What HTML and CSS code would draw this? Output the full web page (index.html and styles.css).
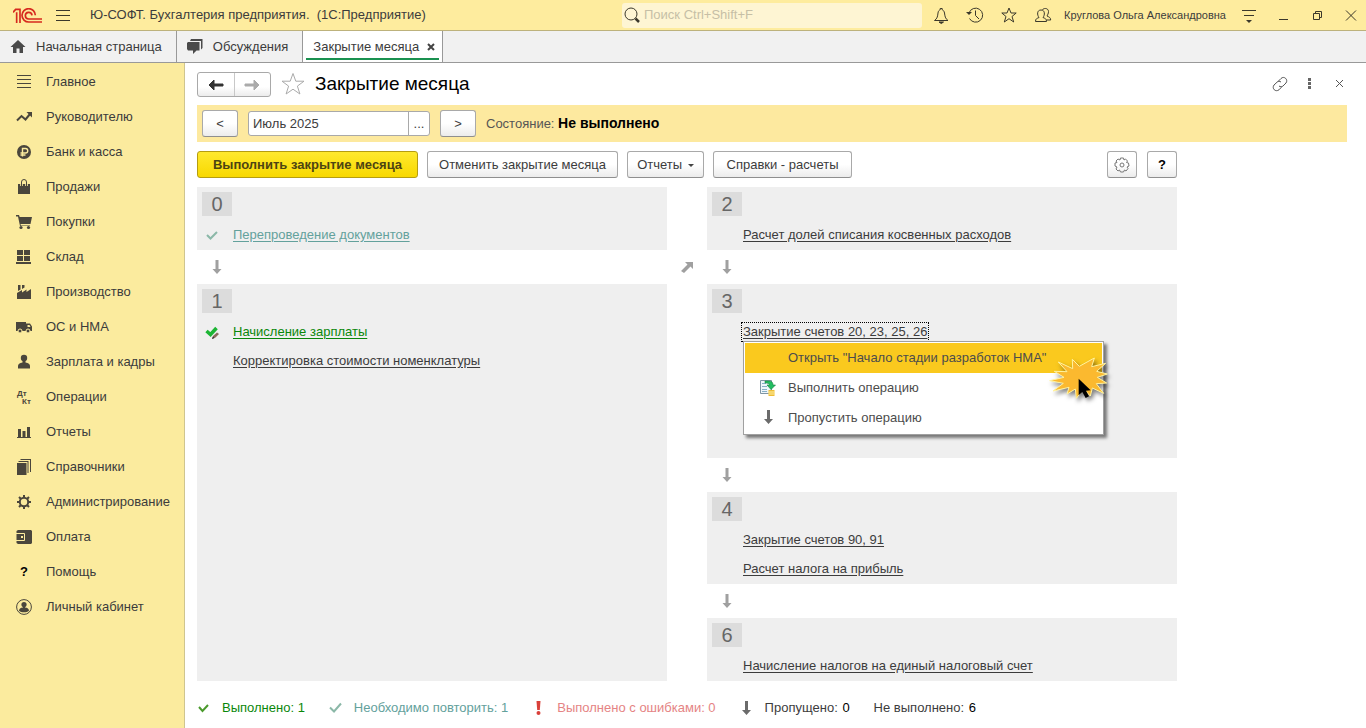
FILE: index.html
```html
<!DOCTYPE html>
<html lang="ru">
<head>
  <meta charset="UTF-8" />
  <title>Закрытие месяца</title>
  <meta name="viewport" content="width=device-width, initial-scale=1.0"/>
  <link rel="stylesheet" href="styles.css">
</head>
<body>

  <header class="topbar">
    <svg class="logo" viewBox="0 0 87 45" fill="none" stroke="#d6291e" stroke-width="5">
      <path d="M0 13 L8 4 H21 V45 M11 13 V45"/>
      <path d="M67 22 A20 20 0 1 0 47 42 H87"/>
      <path d="M57 22 A10 10 0 1 0 47 33 H87"/>
    </svg>
    <button class="icon-btn" aria-label="Меню">
      <svg viewBox="0 0 20 20"><path d="M3 5.500h14M3 10.500h14M3 15.500h14"/></svg>
    </button>
    <div class="app-title">Ю-СОФТ. Бухгалтерия предприятия.&nbsp; (1С:Предприятие)</div>
    <div class="search">
      <svg viewBox="0 0 20 20"><circle cx="9" cy="9" r="6"/><path d="M13.500 13.500 L17 17" stroke-width="2.500"/></svg>
      <input type="text" aria-label="Поиск" placeholder="Поиск Ctrl+Shift+F">
    </div>
    <div class="top-icons">
      <button class="icon-btn" aria-label="Уведомления">
        <svg viewBox="0 0 20 20"><path d="M3.500 15.500h13.500c-3-2-3-4.500-3.500-7.500-.3-2-1.500-3-2.300-3.200V3.500h-2v1.300C8.300 5 7.200 6 7 8c-.4 3-.5 5.500-3.500 7.500z"/><path d="M8 17h4.500l-2.200 1.500z" fill="#3b382b"/></svg>
      </button>
      <button class="icon-btn" aria-label="История">
        <svg viewBox="0 0 20 20"><path d="M4 8a7 7 0 1 1 .5 5.500M10.500 5.500V10.500L14 14"/><path d="M1 7h6L4 10z" fill="#3b382b" stroke="none"/></svg>
      </button>
      <button class="icon-btn" aria-label="Избранное">
        <svg viewBox="0 0 20 20"><path d="M10 3l2 5h5.200l-4.200 3.500 1.700 5.500L10 13.700 5.300 17 7 11.500 2.800 8H8z"/></svg>
      </button>
      <button class="icon-btn" aria-label="Пользователи">
        <svg viewBox="0 0 20 20"><path d="M2.500 16.500h11c0-3-1.500-3-3.500-4 2-2.500 2.200-7.500-2-7.500s-4 5-2 7.500c-2 1-3.500 1-3.500 4z"/><path d="M9.500 5c.5-2 5.800-2.500 6 1.500 0 2-1 3.500-1.500 4.500 2 1 3.700 1.500 3.700 4h-4"/></svg>
      </button>
      <a class="user" href="#">Круглова Ольга Александровна</a>
      <button class="icon-btn" aria-label="Сервис">
        <svg viewBox="0 0 20 20"><path d="M3 5.500h14M5 10.500h10"/><path d="M7 15h6l-3 3z" fill="#3b382b" stroke="none"/></svg>
      </button>
      <button class="icon-btn" aria-label="Свернуть">
        <svg viewBox="0 0 20 20"><path d="M6 14.500h9"/></svg>
      </button>
      <button class="icon-btn" aria-label="Развернуть">
        <svg viewBox="0 0 20 20"><path d="M6.500 8.500h6v6h-6zM8.500 8V6.500h6v6h-2"/></svg>
      </button>
      <button class="icon-btn" aria-label="Закрыть">
        <svg viewBox="0 0 20 20"><path d="M5 5.500l10 10M15 5.500l-10 10"/></svg>
      </button>
    </div>
  </header>

  <nav class="tabs">
    <a class="tab" href="#">
      <svg viewBox="0 0 16 16"><path d="M8 1L.5 8H3v6h3.500V9.500h3V14H13V8h2.500z"/></svg>
      Начальная страница
    </a>
    <a class="tab" href="#">
      <svg viewBox="0 0 16 16"><path d="M4 0h11.500v9l-1.500 1.500V2H3z"/><path d="M1 3h11.500v8.500H9.500L6 15v-3.500H1L0 10V4z"/></svg>
      Обсуждения
    </a>
    <div class="tab active">
      <a href="#">Закрытие месяца</a>
      <button class="tab-close" aria-label="Закрыть вкладку">
        <svg viewBox="0 0 8 8"><path d="M1 1l6 6M7 1L1 7"/></svg>
      </button>
    </div>
  </nav>

  <div class="layout">

    <nav class="sidebar">
      <a href="#"><svg viewBox="0 0 16 16"><path d="M1 1h14v1H1zM1 5h14v1H1zM1 9h14v1H1zM1 13h14v1H1z"/></svg>Главное</a>
      <a href="#"><svg viewBox="0 0 16 16"><path d="M1 11.500L5.500 7l4 3.500L14 5" fill="none" stroke="#4a463c" stroke-width="2"/><path d="M10.500 3H16v5.500z"/></svg>Руководителю</a>
      <a href="#"><svg viewBox="0 0 16 16"><circle cx="8" cy="8" r="7"/><path d="M6.500 12.500V4.500H9.500a2 2 0 0 1 0 4.500H4.500M4.500 11h5" fill="none" stroke="#fbeb9e" stroke-width="1.400"/></svg>Банк и касса</a>
      <a href="#"><svg viewBox="0 0 16 16"><path d="M2 5h12v10H2z"/><path d="M5.500 7V3.500a2.500 2.500 0 0 1 5 0V7" fill="none" stroke="#fbeb9e" stroke-width="2.600"/><path d="M5.500 7V3a2.500 2.500 0 0 1 5 0V7" fill="none" stroke="#4a463c" stroke-width="1"/></svg>Продажи</a>
      <a href="#"><svg viewBox="0 0 16 16"><path d="M0 1h3l.7 2H16l-1.500 7H4.500l.3 1.500H14V12H4L2 2.500H0z"/><circle cx="5" cy="13.500" r="1.600"/><circle cx="12.500" cy="13.500" r="1.600"/></svg>Покупки</a>
      <a href="#"><svg viewBox="0 0 16 16"><path d="M1 1h6v5H1zM8 1h6v5H8zM1 7h6v5H1zM8 7h6v5H8zM0 13h15v2H0z"/></svg>Склад</a>
      <a href="#"><svg viewBox="0 0 16 16"><path d="M1 15V9l5-3v2.500l4.500-3V8L15 5v10z"/><path d="M2 1h2.500v4.500L2 7zM6 1h2.500v2.500L6 5z"/></svg>Производство</a>
      <a href="#"><svg viewBox="0 0 16 16"><path d="M0 3h10v9H0zM10 4.500h4L16 7.500V12h-6z"/><path d="M11.500 6h2l1 2h-3z" fill="#fbeb9e"/><circle cx="4" cy="12" r="2" stroke="#fbeb9e"/><circle cx="12" cy="12" r="2" stroke="#fbeb9e"/></svg>ОС и НМА</a>
      <a href="#"><svg viewBox="0 0 16 16"><circle cx="8" cy="4" r="3.200"/><path d="M6.500 6h3v2.500c3 .5 4.500 1.500 4.500 3.500v2.500H2V12c0-2 1.500-3 4.500-3.500z"/></svg>Зарплата и кадры</a>
      <a href="#"><svg viewBox="0 0 16 16" class="dtkt"><text x="1" y="7">Дт</text><text x="6" y="15">Кт</text></svg>Операции</a>
      <a href="#"><svg viewBox="0 0 16 16"><path d="M1 13h14v1H1zM2 5h3v8H2zM6.500 7h3v6h-3zM11 3h3v10h-3z"/></svg>Отчеты</a>
      <a href="#"><svg viewBox="0 0 16 16"><path d="M1 4h9.500v12H1zM2.500 2H12.500v12h-1V3h-9zM4.500 0H15v13h-1V1H4.500z"/></svg>Справочники</a>
      <a href="#"><svg viewBox="0 0 16 16"><circle cx="8" cy="8" r="4.200" fill="none" stroke="#4a463c" stroke-width="2"/><path d="M8 1v3M8 12v3M1 8h3M12 8h3M3 3l2 2M11 11l2 2M13 3l-2 2M5 11l-2 2" stroke="#4a463c" stroke-width="2"/></svg>Администрирование</a>
      <a href="#"><svg viewBox="0 0 16 16"><path d="M2 1h13l1 1v12l-1 1H2l-1.500-1V2z"/><path d="M0 4.500h8.500v7H0" fill="none" stroke="#fbeb9e"/><path d="M5 7h2v2H5z" fill="#fbeb9e"/></svg>Оплата</a>
      <a href="#"><b>?</b>Помощь</a>
      <a href="#"><svg viewBox="0 0 16 16"><circle cx="8" cy="8" r="7.400" fill="none" stroke="#4a463c"/><circle cx="8" cy="5.500" r="2.600"/><path d="M7 7h2v1.500c2.500.3 4 1.200 4 3.200-2.500 2-7.500 2-10 0 0-2 1.500-2.900 4-3.200z"/></svg>Личный кабинет</a>
    </nav>

    <main class="main">

      <div class="form-head">
        <div class="history">
          <button aria-label="Назад"><svg viewBox="0 0 16 12"><path d="M1 6l5-5v4h9v2H6v4z"/></svg></button>
          <button aria-label="Вперед" disabled><svg viewBox="0 0 16 12"><path d="M15 6l-5-5v4H1v2h9v4z"/></svg></button>
        </div>
        <button class="fav" aria-label="В избранное">
          <svg viewBox="0 0 24 24"><path d="M12 1.500l2.800 7.700H23l-6.600 4.900 2.500 7.900-6.900-4.800L5.100 22l2.500-7.900L1 9.200h8.200z"/></svg>
        </button>
        <h1>Закрытие месяца</h1>
        <div class="form-tools">
          <button class="icon-btn" aria-label="Ссылка">
            <svg viewBox="0 0 20 20"><path d="M8 7.500l3-3c3-3 7.500 1 5 4.500l-3 3c-1 1-2.800 1-4 0M11 8c-1.500-1-3-.8-4 .2L4 11c-2.500 3.500 1.500 7.500 5 4.800l2.500-2.600"/></svg>
          </button>
          <button class="icon-btn" aria-label="Еще">
            <svg viewBox="0 0 20 20"><path d="M8 4h3v3H8zM8 8h3v3H8zM8 12h3v3H8z" fill="#666" stroke="none"/></svg>
          </button>
          <button class="icon-btn" aria-label="Закрыть форму">
            <svg viewBox="0 0 20 20"><path d="M6 6l7 7M13 6l-7 7"/></svg>
          </button>
        </div>
      </div>

      <div class="period">
        <button class="btn step" aria-label="Предыдущий месяц">&lt;</button>
        <div class="period-field">
          <input type="text" aria-label="Период" value="Июль 2025">
          <button aria-label="Выбрать период">...</button>
        </div>
        <button class="btn step" aria-label="Следующий месяц">&gt;</button>
        <div class="state">Состояние: <b>Не выполнено</b></div>
      </div>

      <div class="commands">
        <button class="btn primary">Выполнить закрытие месяца</button>
        <button class="btn cancel">Отменить закрытие месяца</button>
        <button class="btn reports">Отчеты <span class="caret"></span></button>
        <button class="btn refs">Справки - расчеты</button>
        <div class="side-commands">
          <button class="btn square" aria-label="Настройки">
            <svg viewBox="0 0 16 16"><circle cx="8" cy="8" r="2"/><path d="M6.500 1h3l.5 2 1.500-1 2 2-1 1.500 2 .5.500 3-2 1 1 1.500-2 2.500-1.500-1-1 2h-3l-1-2-1.500 1-2-2 1-2-2-1V6l2-.5-1-1.500 2-2L6 3z"/></svg>
          </button>
          <button class="btn square" aria-label="Справка"><b>?</b></button>
        </div>
      </div>

      <div class="board">
        <div class="column">
          <section class="stage">
            <h2>0</h2>
            <ul>
              <li>
                <svg class="mark" viewBox="0 0 14 14"><path d="M2 7l3.500 3.500L12 4" fill="none" stroke="#8bb8a8" stroke-width="2"/></svg>
                <a class="repeat" href="#">Перепроведение документов</a>
              </li>
            </ul>
          </section>
          <div class="flow">
            <svg viewBox="0 0 10 14"><path d="M3.500 0h3v9H9.500L5 14 .5 9h3z"/></svg>
            <svg class="diag" viewBox="0 0 12 12"><path d="M4 1h8v7L9.500 5.500 3 12 0 10l6.500-6.500z"/></svg>
          </div>
          <section class="stage grow">
            <h2>1</h2>
            <ul>
              <li>
                <svg class="mark" viewBox="0 0 14 14"><path d="M1.500 6l4 3.500L11.500 3" fill="none" stroke="#1cb534" stroke-width="3.500"/><path d="M7 14l1-3L12 7.500l2 1.500-3.500 3.500z" fill="#8b6a5c"/><path d="M7 14l1-2.500 1.500 1.500z" fill="#333"/></svg>
                <a class="done" href="#">Начисление зарплаты</a>
              </li>
              <li><a href="#">Корректировка стоимости номенклатуры</a></li>
            </ul>
          </section>
        </div>

        <div class="column">
          <section class="stage">
            <h2>2</h2>
            <ul>
              <li><a href="#">Расчет долей списания косвенных расходов</a></li>
            </ul>
          </section>
          <div class="flow"><svg viewBox="0 0 10 14"><path d="M3.500 0h3v9H9.500L5 14 .5 9h3z"/></svg></div>
          <section class="stage tall">
            <h2>3</h2>
            <ul>
              <li>
                <a class="focused" href="#">Закрытие счетов 20, 23, 25, 26</a>
                <div class="menu">
                  <button class="selected"><span></span>Открыть "Начало стадии разработок НМА"</button>
                  <button>
                    <svg viewBox="0 0 16 16"><path d="M.5 .5h11v13H.5z" fill="#eef5fa" stroke="#7f95a4"/><path d="M2 3.500h4M2 6.500h5M2 9.500h5M2 11.500h5" stroke="#86aec4"/><path d="M5 1h3c3.500 0 5 1 5 4h2.500L11 9.500 7 5h2.500C9.500 3.500 8 3 5 3z" fill="#22bd62" stroke="#15823d" stroke-width=".6"/><path d="M8.500 10h6v6h-6z" fill="#eebc35"/><path d="M8.500 12h6M8.500 14h6" stroke="#fff2a8"/></svg>
                    Выполнить операцию
                  </button>
                  <button>
                    <svg viewBox="0 0 16 16"><path d="M7 0h3v9h3l-4.500 5L4 9h3z" fill="#6b6b6b"/></svg>
                    Пропустить операцию
                  </button>
                  <!-- вспышка клика с курсором -->
                  <svg class="click" viewBox="950 100 210 150">
                    <path class="burst" d="M958 180L1001 170 972 152 1010 153 984 124 1027 144 1026 116 1047 137 1092 112 1084 138 1126 128 1099 152 1131 160 1101 170 1129 187 1098 189 1120 218 1086 202 1080 226 1060 205 1038 233 1035 205 1010 220 1016 200 968 211 999 188z"/>
                    <path d="M1045 174V224L1056 214 1066 232 1076 227 1067 210 1081 209z"/>
                  </svg>
                </div>
              </li>
            </ul>
          </section>
          <div class="flow"><svg viewBox="0 0 10 14"><path d="M3.500 0h3v9H9.500L5 14 .5 9h3z"/></svg></div>
          <section class="stage">
            <h2>4</h2>
            <ul>
              <li><a href="#">Закрытие счетов 90, 91</a></li>
              <li><a href="#">Расчет налога на прибыль</a></li>
            </ul>
          </section>
          <div class="flow"><svg viewBox="0 0 10 14"><path d="M3.500 0h3v9H9.500L5 14 .5 9h3z"/></svg></div>
          <section class="stage">
            <h2>6</h2>
            <ul>
              <li><a href="#">Начисление налогов на единый налоговый счет</a></li>
            </ul>
          </section>
        </div>
      </div>

      <footer class="legend">
        <div class="done"><svg viewBox="0 0 14 14"><path d="M2 6l3.500 4L11 4" fill="none" stroke="#4a9a2c" stroke-width="2"/></svg>Выполнено:&nbsp;1</div>
        <div class="repeat"><svg viewBox="0 0 14 14"><path d="M1 6.500l4 4L12 2.500" fill="none" stroke="#8bb8a8" stroke-width="2"/></svg>Необходимо повторить:&nbsp;1</div>
        <div class="error"><svg viewBox="0 0 14 14"><path d="M4.500 0h4l-.7 9H5.200z" fill="#d9403a"/><circle cx="6.500" cy="12" r="2" fill="#d9403a"/></svg>Выполнено с ошибками:&nbsp;0</div>
        <div><svg viewBox="0 0 14 14"><path d="M5 0h3v9h3l-4.500 5L2 9h3z" fill="#6b6b6b"/></svg>Пропущено:&nbsp;<span>0</span></div>
        <div>Не выполнено:&nbsp;<span>6</span></div>
      </footer>

    </main>
  </div>

</body>
</html>
```
FILE: styles.css
```css
:root {
  --yellow: #fbeb9e;
  --text:   #3c3c3c;
  --border: #a9a9a9;
  --panel:  #efefef;
}

* {
  box-sizing: border-box;
  margin: 0;
  padding: 0;
}

body {
  display: flex;
  flex-direction: column;
  min-height: 100vh;
  font-family: "Liberation Sans", Arial, sans-serif;
  font-size: 13px;
  line-height: 16px;
  color: var(--text);
  background: #fff;
}

a {
  color: inherit;
  text-decoration: none;
}

button, input {
  font: inherit;
  color: inherit;
}

button {
  cursor: pointer;
}

/* верхняя панель */
.topbar {
  display: flex;
  align-items: center;
  height: 31px;
  padding: 0 5px 0 13px;
  background: #feec9e;
  border-bottom: 1px solid #bdb27c;
}

.logo {
  width: 29px;
  height: 15px;
  margin-right: 11px;
}

.icon-btn {
  width: 20px;
  height: 20px;
  border: none;
  background: none;
}

.icon-btn svg, .search svg {
  display: block;
  width: 20px;
  height: 20px;
  fill: none;
  stroke: #3b382b;
}

.app-title {
  margin-left: 17px;
}

.search {
  display: flex;
  align-items: center;
  width: 300px;
  height: 25px;
  margin-left: auto;
  background: #fef5d3;
  border-radius: 3px;
}

.search input {
  flex: 1;
  border: none;
  outline: none;
  background: none;
  padding-left: 2px;
}

.search input::placeholder {
  color: #c6bfa6;
}

.top-icons {
  display: flex;
  align-items: center;
  gap: 14px;
  margin-left: 9px;
}

.user {
  width: 164px;
  margin: 0 -3px;
  font-size: 11px;
  white-space: nowrap;
}

/* вкладки */
.tabs {
  display: flex;
  height: 32px;
  background: #f1f1f1;
  border-bottom: 1px solid #999;
}

.tab {
  display: flex;
  align-items: center;
  gap: 10px;
  padding: 0 14px 0 10px;
  border-right: 1px solid #999;
}

.tab > svg {
  width: 16px;
  height: 16px;
  fill: #4a4a4a;
}

.tab.active {
  position: relative;
  gap: 8px;
  padding: 0 7px 0 10px;
  background: #fff;
}

.tab.active::after {
  content: "";
  position: absolute;
  left: 3px;
  right: 3px;
  bottom: 2px;
  height: 2px;
  background: #1a9150;
}

.tab-close {
  width: 8px;
  height: 8px;
  border: none;
  background: none;
}

.tab-close svg {
  display: block;
  stroke: #444;
  stroke-width: 2;
}

.layout {
  display: flex;
  flex: 1;
}

/* разделы */
.sidebar {
  flex: 0 0 185px;
  padding-top: 1px;
  background: var(--yellow);
  border-right: 1px solid #cfc58f;
}

.sidebar a {
  display: flex;
  align-items: center;
  gap: 14px;
  height: 35px;
  padding-left: 16px;
}

.sidebar svg, .sidebar b {
  width: 16px;
  height: 16px;
  fill: #4a463c;
  text-align: center;
  color: #000;
}

.dtkt text {
  font-size: 8px;
  font-weight: bold;
}

/* форма */
.main {
  display: flex;
  flex-direction: column;
  flex: 1;
  min-width: 0;
  padding: 0 19px 0 12px;
}

.form-head {
  display: flex;
  align-items: center;
  height: 42px;
}

.history {
  display: flex;
  width: 74px;
  height: 25px;
  border: 1px solid var(--border);
  border-radius: 3px;
  background: linear-gradient(#fff 60%, #ececec);
}

.history button {
  flex: 1;
  border: none;
  background: none;
}

.history button + button {
  border-left: 1px solid #c8c8c8;
}

.history svg {
  width: 16px;
  height: 12px;
  fill: #333;
  stroke: #333;
  stroke-width: 1;
  vertical-align: middle;
}

.history button:disabled svg {
  fill: #aaa;
  stroke: #aaa;
}

.fav {
  width: 24px;
  height: 24px;
  margin: 0 10px;
  border: none;
  background: none;
}

.fav svg {
  display: block;
  fill: none;
  stroke: #aaa;
}

h1 {
  font-size: 19px;
  font-weight: normal;
  line-height: 24px;
  color: #000;
}

.form-tools {
  display: flex;
  gap: 10px;
  margin-left: auto;
  margin-right: -3px;
}

.form-tools svg {
  stroke: #555;
}

.btn {
  height: 27px;
  border: 1px solid var(--border);
  border-bottom-color: #8f8f8f;
  border-radius: 3px;
  background: linear-gradient(#fff 50%, #ececec);
  white-space: nowrap;
}

.period {
  display: flex;
  align-items: center;
  height: 37px;
  padding: 0 5px;
  background: #fde99f;
}

.step {
  width: 36px;
}

.period-field {
  display: flex;
  width: 182px;
  height: 25px;
  margin: 0 10px;
  border: 1px solid var(--border);
  border-radius: 3px;
  background: #fff;
}

.period-field input {
  flex: 1;
  min-width: 0;
  padding-left: 4px;
  border: none;
  outline: none;
  background: none;
}

.period-field button {
  width: 21px;
  border: none;
  border-left: 1px solid var(--border);
  background: none;
}

.state {
  margin-left: 10px;
  color: #555;
}

.state b {
  font-size: 14px;
  color: #000;
}

.commands {
  display: flex;
  gap: 9px;
  max-width: 980px;
  padding: 9px 0;
}

.primary {
  width: 221px;
  font-weight: bold;
  color: #4d4412;
  border-color: #b59d10;
  background: linear-gradient(#ffe92e, #f8d800);
}

.cancel {
  width: 191px;
}

.reports {
  width: 77px;
}

.refs {
  width: 139px;
}

.caret {
  display: inline-block;
  margin-left: 2px;
  border: 3px solid transparent;
  border-top-color: #444;
  border-bottom: none;
  vertical-align: middle;
}

.side-commands {
  display: flex;
  gap: 10px;
  margin-left: auto;
}

.square {
  width: 30px;
}

.square svg {
  display: block;
  width: 16px;
  height: 16px;
  margin: auto;
  fill: none;
  stroke: #777;
}

.square b {
  color: #000;
}

/* этапы закрытия */
.board {
  display: grid;
  grid-template-columns: 1fr 1fr;
  gap: 40px;
  max-width: 980px;
}

.column {
  display: flex;
  flex-direction: column;
}

.stage {
  padding: 5px 5px 1px;
  background: var(--panel);
}

.stage.grow {
  flex: 1;
}

.stage.tall {
  min-height: 174px;
}

.stage h2 {
  width: 30px;
  height: 24px;
  margin-bottom: 4px;
  background: #dcdcdc;
  font-size: 20px;
  font-weight: normal;
  line-height: 24px;
  text-align: center;
  color: #666;
}

.stage ul {
  list-style: none;
}

.stage li {
  position: relative;
  display: flex;
  align-items: center;
  height: 29px;
  padding-left: 31px;
}

.stage li > a {
  text-decoration: underline;
  text-underline-offset: 2px;
}

.mark {
  position: absolute;
  left: 3px;
  width: 14px;
  height: 14px;
}

.done {
  color: #0a870a;
}

.repeat {
  color: #63a19c;
}

.error {
  color: #e58484;
}

.flow {
  position: relative;
  display: flex;
  align-items: center;
  height: 34px;
  padding-left: 15px;
  fill: #a0a0a0;
}

.flow svg {
  width: 10px;
  height: 14px;
}

.flow .diag {
  position: absolute;
  right: -26px;
  width: 12px;
  height: 12px;
}

.focused {
  outline: 1px dotted #000;
  outline-offset: 1px;
}

.menu {
  position: absolute;
  z-index: 1;
  top: 24px;
  left: 31px;
  width: 361px;
  padding: 1px;
  border: 1px solid #a0a0a0;
  background: #fff;
  box-shadow: 3px 3px 3px rgba(0,0,0,0.5);
}

.menu button {
  display: flex;
  align-items: center;
  gap: 12px;
  width: 100%;
  height: 30px;
  padding-left: 15px;
  border: none;
  background: none;
  color: #4c4c4c;
}

.menu button svg, .menu button span {
  width: 16px;
  height: 16px;
}

.menu .selected {
  background: #fac91e;
}

.click {
  position: absolute;
  top: 12px;
  right: -14px;
  width: 70px;
  height: 50px;
  filter: drop-shadow(2px 3px 2px rgba(0,0,0,0.5));
}

.burst {
  fill: #fbb92f;
  stroke: #fff3a0;
  stroke-width: 3;
}

/* итоги */
.legend {
  display: flex;
  align-items: center;
  flex-wrap: wrap;
  gap: 24px;
  min-height: 47px;
  padding-top: 6px;
}

.legend div {
  display: flex;
  align-items: center;
}

.legend svg {
  width: 14px;
  height: 14px;
  margin-right: 11px;
}

.legend span {
  margin-left: 1px;
  color: #000;
}
```
